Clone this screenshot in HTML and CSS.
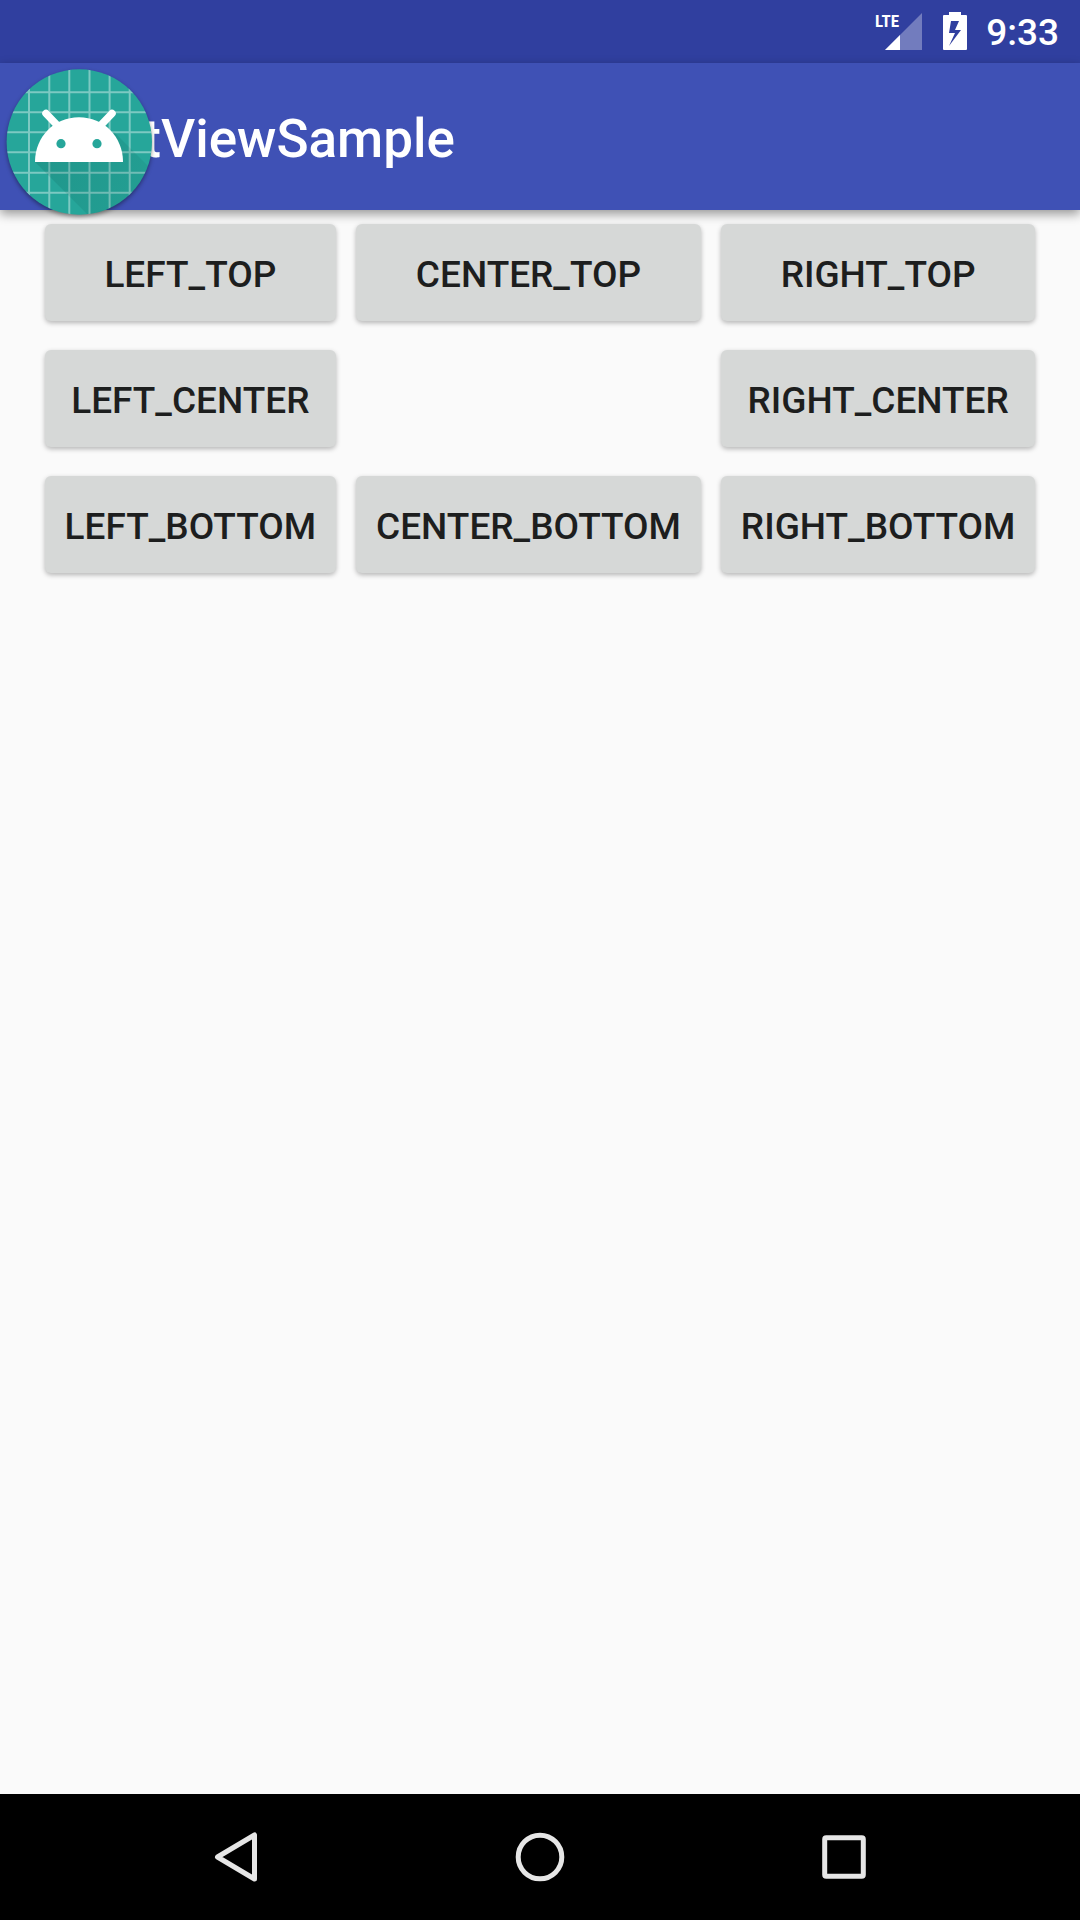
FILE: index.html
```html
<!DOCTYPE html>
<html lang="en">
<head>
<meta charset="utf-8">
<meta name="viewport" content="width=device-width, initial-scale=1">
<title>FloatViewSample</title>
<link rel="stylesheet" href="styles.css">
</head>
<body>
<div class="status-bar">
  <svg class="signal" width="48" height="42" viewBox="0 0 48 42" role="img" aria-label="LTE signal">
    <path d="M46 1V38H9z" fill="#fff" opacity=".32"/>
    <path d="M24 23V38H9z" fill="#fff"/>
    <text class="network" x="-1" y="15">LTE</text>
  </svg>
  <svg class="battery" width="24" height="42" viewBox="0 0 24 42" role="img" aria-label="Battery charging">
    <path fill="#fff" fill-rule="evenodd" d="M6 0H18V3H23Q24 3 24 4V37Q24 38 23 38H1Q0 38 0 37V4Q0 3 1 3H6zM8 9L6 21H12L6 34L18 18H12L16 9z"/>
  </svg>
  <time class="clock">9:33</time>
</div>
<header class="app-bar">
  <h1 class="title">FloatViewSample</h1>
</header>
<main class="content">
  <div class="positions">
    <button class="position" type="button">LEFT_TOP</button>
    <button class="position" type="button">CENTER_TOP</button>
    <button class="position" type="button">RIGHT_TOP</button>
    <button class="position" type="button">LEFT_CENTER</button>
    <button class="position last-column" type="button">RIGHT_CENTER</button>
    <button class="position" type="button">LEFT_BOTTOM</button>
    <button class="position" type="button">CENTER_BOTTOM</button>
    <button class="position" type="button">RIGHT_BOTTOM</button>
  </div>
</main>
<nav class="nav-bar">
  <button class="nav-button" type="button" aria-label="Back">
    <svg width="50" height="50" viewBox="0 0 50 50"><path d="M43.500 3V47L6.500 25z"/></svg>
  </button>
  <button class="nav-button" type="button" aria-label="Home">
    <svg width="50" height="50" viewBox="0 0 50 50"><circle cx="25" cy="25" r="21.800"/></svg>
  </button>
  <button class="nav-button" type="button" aria-label="Recent apps">
    <svg width="50" height="50" viewBox="0 0 50 50"><rect x="5.700" y="5.700" width="38.600" height="38.600" rx="1.500"/></svg>
  </button>
</nav>
<button class="float-view" type="button" aria-label="Floating view">
  <svg width="160" height="160" viewBox="0 0 160 160">
    <defs>
      <clipPath id="disc"><circle cx="79.300" cy="82" r="72.700"/></clipPath>
      <linearGradient id="shade" x1="40" y1="90" x2="130" y2="150" gradientUnits="userSpaceOnUse">
        <stop offset="0" stop-color="#00433c" stop-opacity=".16"/>
        <stop offset="1" stop-color="#00433c" stop-opacity=".08"/>
      </linearGradient>
    </defs>
    <circle class="disc" cx="79.300" cy="82" r="72.700"/>
    <g clip-path="url(#disc)">
      <path class="grid" d="M29 0V160M49.300 0V160M69.300 0V160M89.500 0V160M109.600 0V160M129.700 0V160M0 32.300H160M0 52.300H160M0 72.300H160M0 92.300H160M0 112.700H160M0 132.700H160"/>
      <path fill="url(#shade)" d="M35 102L95 162H160V118L113 71L123 102z"/>
    </g>
    <path d="M46 53.500L57 65M112 53.500L101 65" fill="none" stroke="#fff" stroke-width="7.500" stroke-linecap="round"/>
    <path fill="#fff" d="M35 102C35 77 54 57.300 79 57.300S123 77 123 102z"/>
    <circle cx="61" cy="83.700" r="4.600" fill="#26a69a"/>
    <circle cx="97" cy="83.700" r="4.600" fill="#26a69a"/>
  </svg>
</button>
</body>
</html>
```
FILE: styles.css
```css
* {
  box-sizing: border-box;
}

body {
  display: flex;
  flex-direction: column;
  min-height: 100vh;
  margin: 0;
  background: #fafafa;
  font-family: Roboto, sans-serif;
  font-weight: 500;
}

button {
  border: 0;
  font: inherit;
  cursor: pointer;
}

svg {
  display: block;
}

.status-bar {
  display: flex;
  align-items: center;
  justify-content: flex-end;
  height: 63px;
  padding: 3px 21px 0;
  background: #303f9f;
  color: #fff;
}

.signal {
  margin-right: 19px;
  overflow: visible;
}

.network {
  fill: #fff;
  font-family: "Liberation Sans Narrow", "Roboto Condensed", Roboto, sans-serif;
  font-size: 17px;
  font-weight: 700;
}

.battery {
  margin-right: 19px;
}

.clock {
  font-size: 37px;
  line-height: 44px;
}

.app-bar {
  display: flex;
  align-items: center;
  height: 147px;
  padding: 4px 42px 0;
  background: #3f51b5;
  box-shadow: 0 4px 10px rgba(0, 0, 0, 0.4);
  color: #fff;
}

.title {
  margin: 0;
  font-size: 53px;
  font-weight: 500;
  line-height: 62px;
}

.content {
  flex: 1;
  padding: 14px 16px;
}

.positions {
  display: grid;
  grid-template-columns: repeat(3, auto);
  justify-content: center;
  gap: 29px 20px;
}

.position {
  height: 97px;
  padding: 4px 20px 0;
  border-radius: 6px;
  background: #d6d8d7;
  box-shadow: 0 2px 5px rgba(0, 0, 0, 0.28);
  color: #1d1e1e;
  font-size: 37px;
  line-height: 44px;
}

.last-column {
  grid-column: 3;
}

.nav-bar {
  display: grid;
  grid-template-columns: repeat(3, 1fr);
  height: 126px;
  padding: 0 84px;
  background: #000;
}

.nav-button {
  display: flex;
  align-items: center;
  justify-content: center;
  padding: 0;
  background: none;
}

.nav-button svg {
  fill: none;
  stroke: #e6e6e6;
  stroke-width: 5;
  stroke-linejoin: round;
}

.float-view {
  position: absolute;
  top: 60px;
  left: 0;
  padding: 0;
  background: none;
}

.disc {
  fill: #26a69a;
  filter: drop-shadow(0 2px 2px rgba(0, 0, 0, 0.4));
}

.grid {
  fill: none;
  stroke: #fff;
  stroke-opacity: 0.4;
  stroke-width: 2;
}
```
